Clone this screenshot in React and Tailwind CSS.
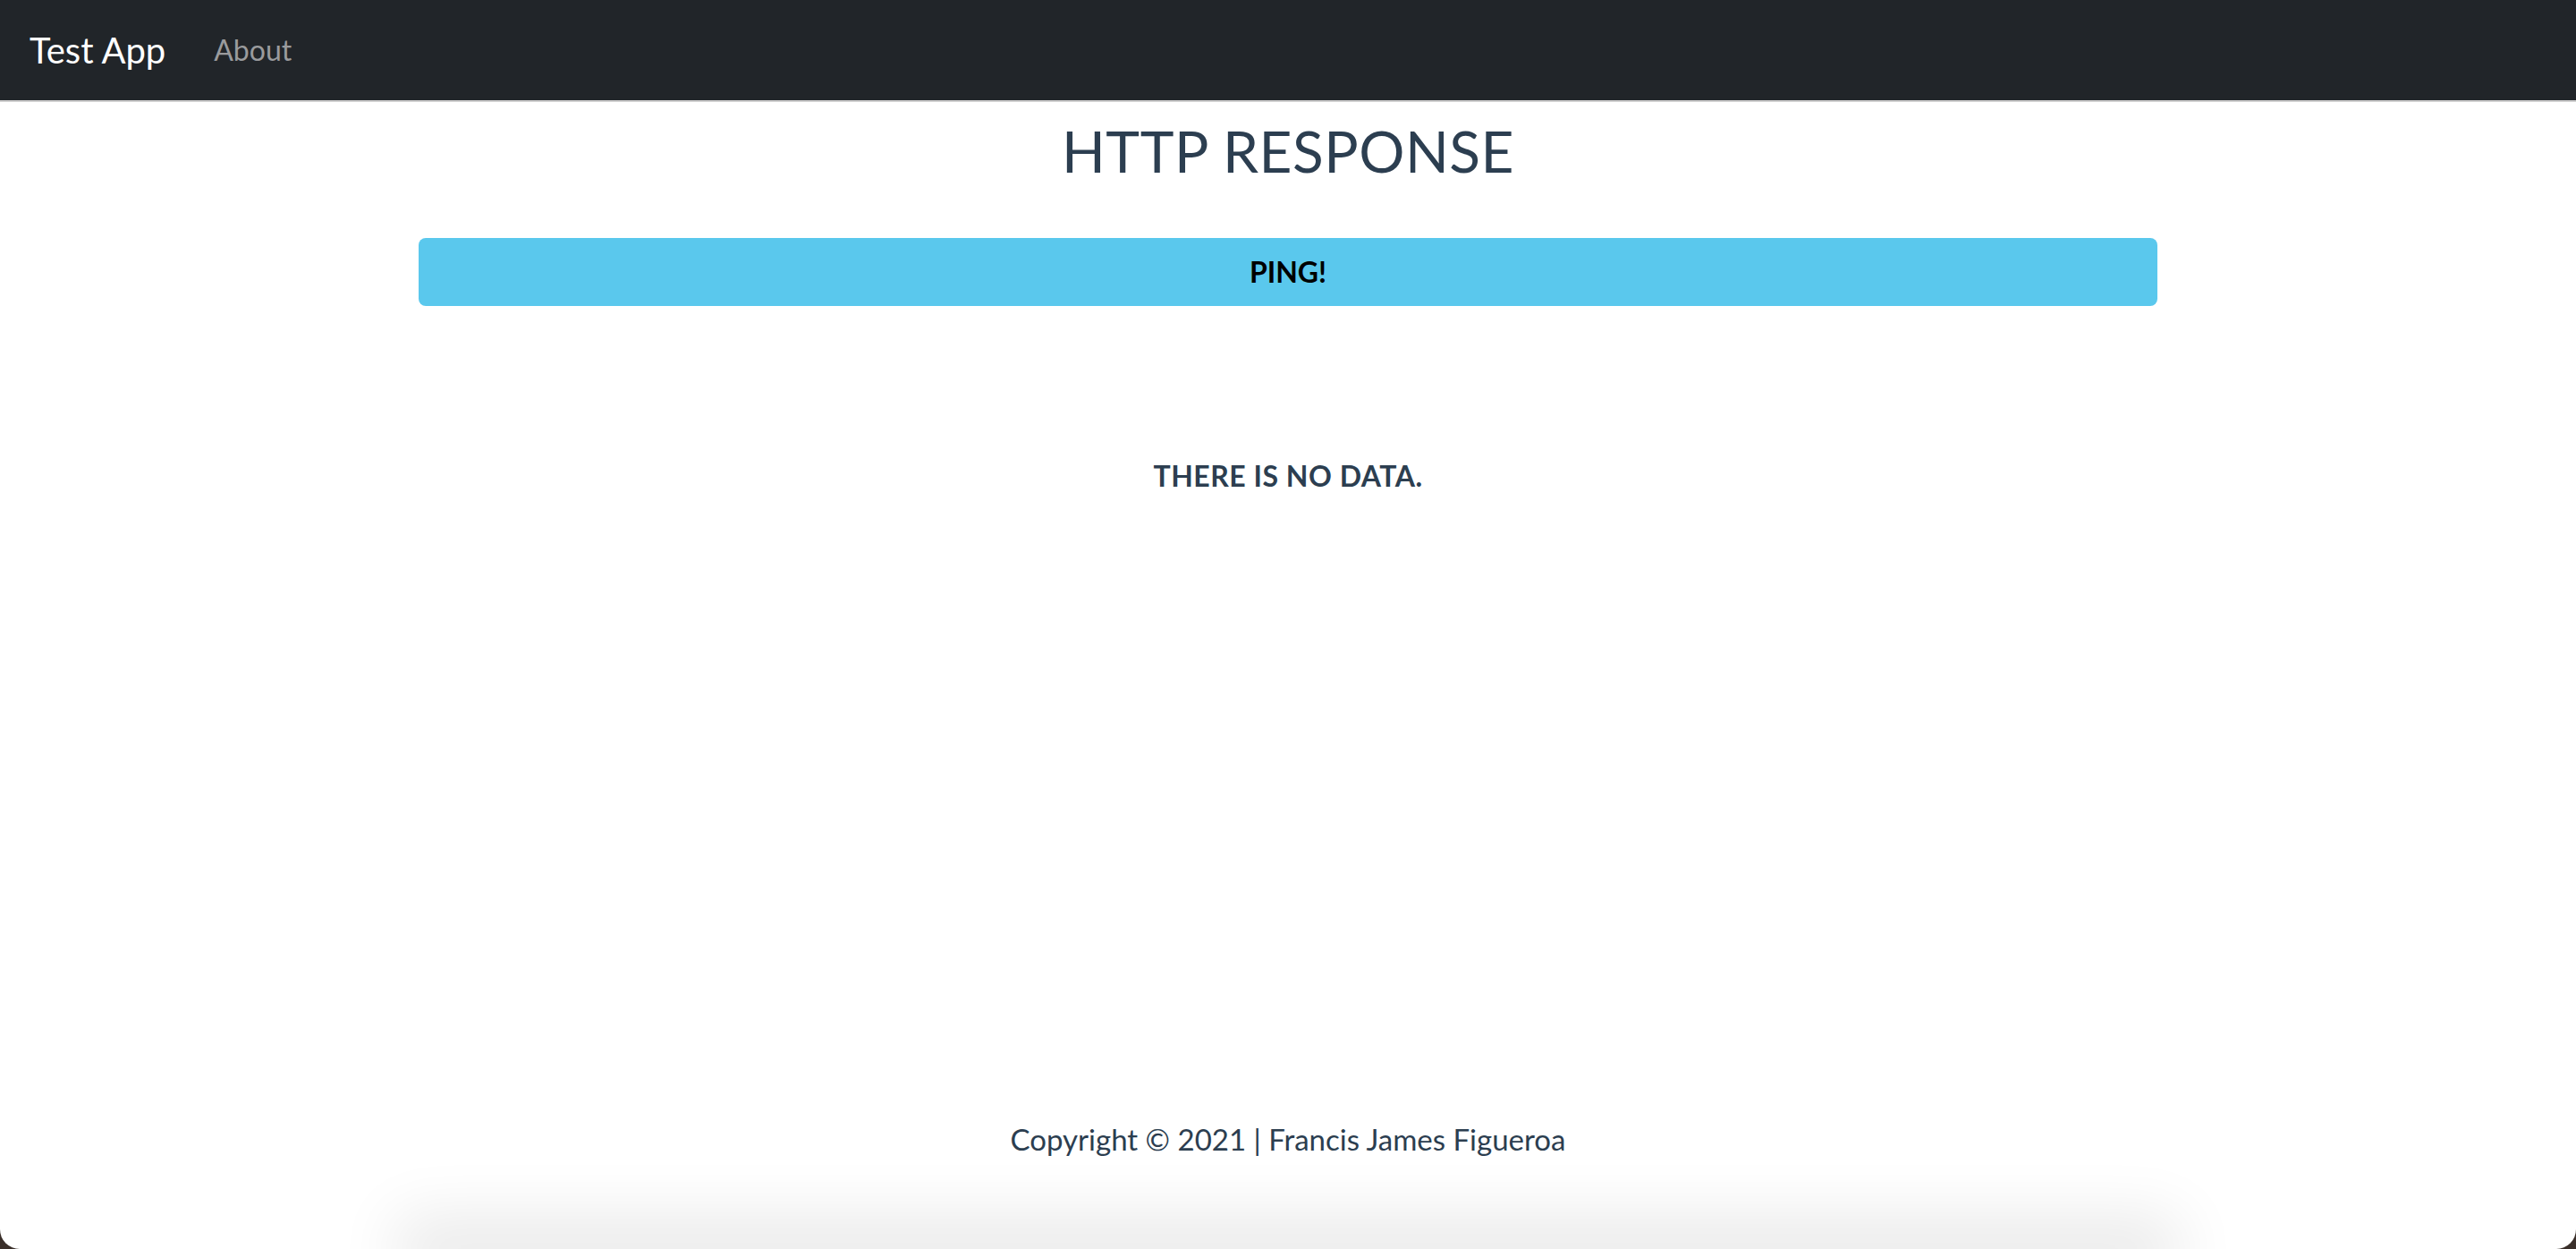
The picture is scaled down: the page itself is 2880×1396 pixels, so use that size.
export default function App() {
  return (
    <div className="h-[1396px] w-full overflow-hidden bg-[#3a2f2a]">
      <div
        className="flex h-full flex-col overflow-hidden rounded-b-[22px] bg-white text-[#2c3e50]"
        style={{ fontFamily: "Lato, 'Noto Sans', Helvetica, Arial, sans-serif" }}
      >
        <nav className="flex h-[114px] shrink-0 items-center gap-[54px] border-b-2 border-[#cfcfcf] bg-[#212529] pl-[33px]">
          <span className="text-[40px] text-white">Test App</span>
          <a className="text-[32px] text-[#9a9b9d]">About</a>
        </nav>

        <main className="flex flex-1 flex-col items-center">
          <h1 className="mt-[15px] text-[64px] leading-[80px] font-normal tracking-[0.5px]">HTTP RESPONSE</h1>
          <div className="mt-[57px] w-full px-[468px]">
            <button className="flex h-[76px] w-full items-center justify-center rounded-[8px] bg-[#5ac8ed] text-[32px] font-bold text-black">
              PING!
            </button>
          </div>
          <h3 className="mt-[166px] text-[32px] leading-[48px] font-bold tracking-[0.5px]">THERE IS NO DATA.</h3>
        </main>

        <footer className="flex flex-col items-center">
          <p className="text-[33px]">Copyright © 2021 | Francis James Figueroa</p>
          <div className="mt-[98px] h-0 w-[1920px] shadow-[0_0_70px_36px_rgba(0,0,0,0.09)]" />
        </footer>
      </div>
    </div>
  );
}
